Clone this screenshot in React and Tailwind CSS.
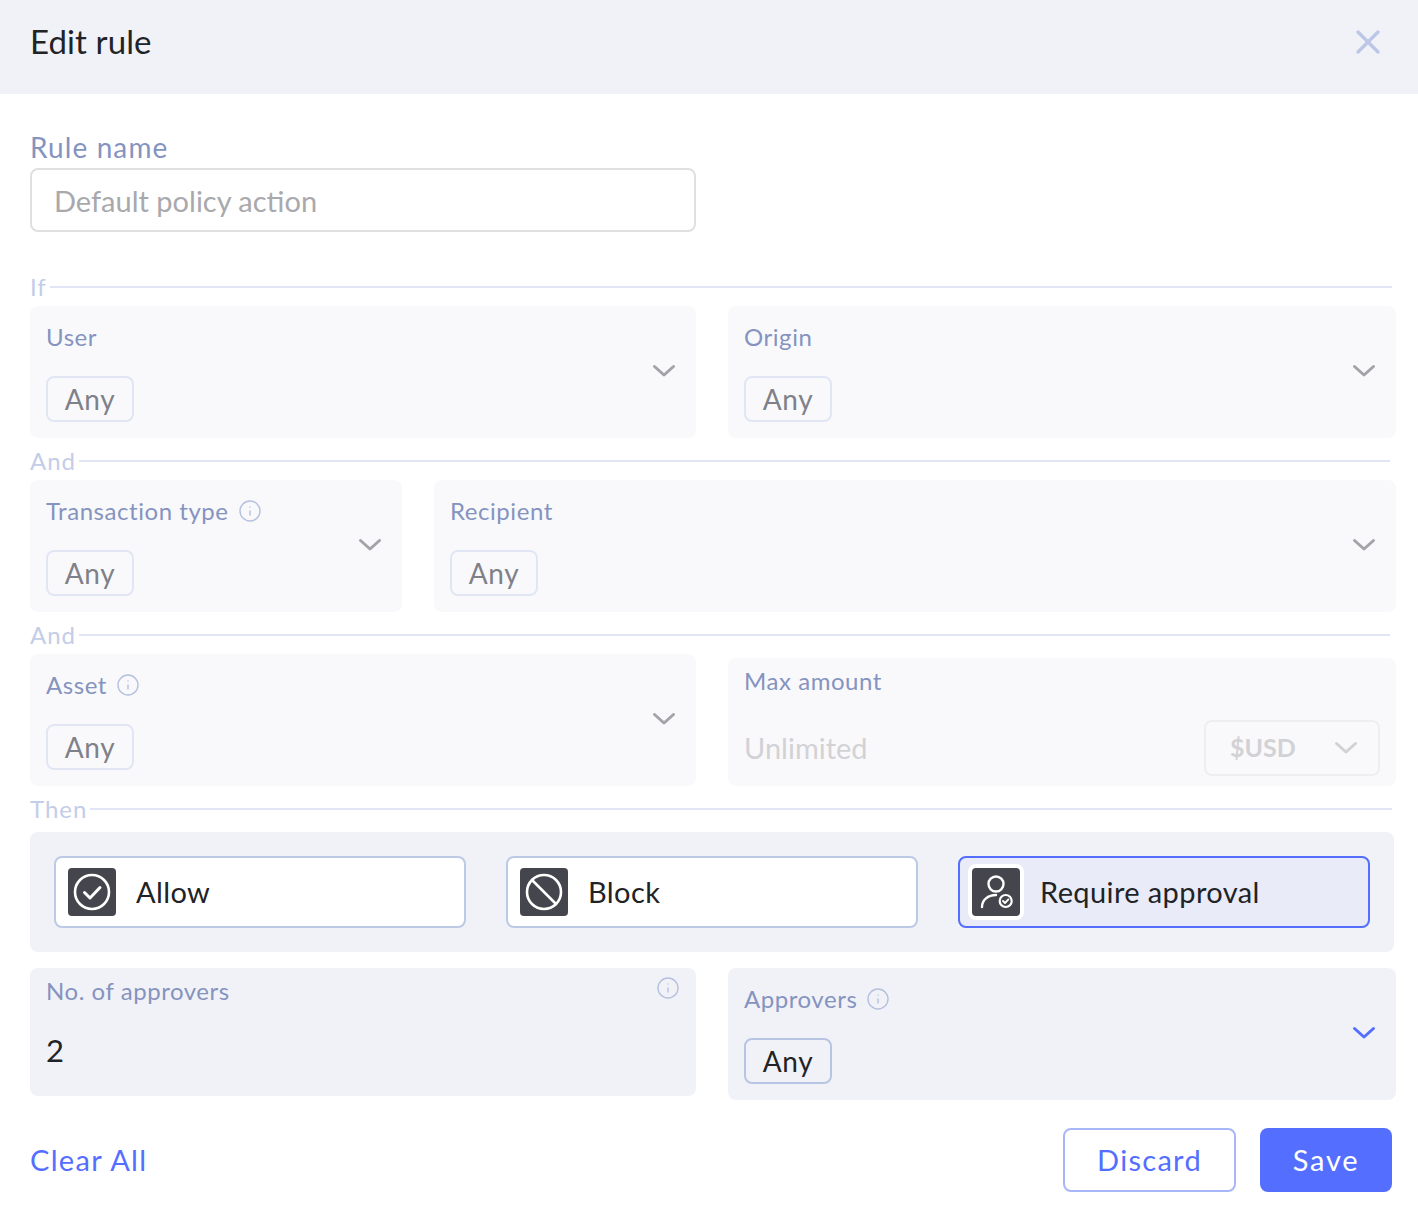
import { X, Info } from "lucide-react";

const labelClass = "text-[24px] leading-[30px] tracking-[0.55px] text-[#8593bf]";

function Chevron({ className = "text-[#a3a3a8]" }) {
  return (
    <svg className={className} width="24" height="14" viewBox="0 0 24 14" fill="none" stroke="currentColor" strokeWidth="3" strokeLinecap="round" strokeLinejoin="round">
      <path d="M2.5 2.5L12 11l9.5-8.5" />
    </svg>
  );
}

function InfoIcon() {
  return <Info className="text-[#b4c0de] ml-[9px]" size={24} strokeWidth={1.4} />;
}

function AnyTag({ active }) {
  return (
    <div
      className={`w-[88px] h-[46px] flex items-center justify-center rounded-lg border-2 text-[28px] tracking-[0.6px] ${
        active
          ? "border-[#b7c5e2] text-[#222326]"
          : "border-[#e1e6f5] text-[#808088]"
      }`}
    >
      Any
    </div>
  );
}

function Divider({ label, lineClass = "mr-[26px]" }) {
  return (
    <div className="flex items-center h-[38px]">
      <span className="text-[24px] leading-none tracking-[1px] text-[#c3cde8]">{label}</span>
      <div className={`flex-1 h-[2px] bg-[#e1e6f7] ml-[3px] ${lineClass}`} />
    </div>
  );
}

function SelectField({ label, info, className = "", active }) {
  return (
    <div className={`relative rounded-lg px-4 pt-[16px] ${active ? "bg-[#f1f2f7]" : "bg-[#f9f9fc]"} ${className}`}>
      <div className={`flex items-center ${labelClass}`}>
        {label}
        {info && <InfoIcon />}
      </div>
      <div className="mt-[24px]">
        <AnyTag active={active} />
      </div>
      <div className="absolute right-[20px] top-[58px]">
        <Chevron className={active ? "text-[#546fff]" : "text-[#a3a3a8]"} />
      </div>
    </div>
  );
}

function ActionOption({ label, selected, children }) {
  return (
    <div
      className={`flex-1 h-[72px] rounded-lg border-2 flex items-center pl-[8px] ${
        selected ? "border-[#546fff] bg-[#e9ebf8]" : "border-[#bccae6] bg-white"
      }`}
    >
      <div className="w-[56px] h-[56px] rounded-lg bg-white flex items-center justify-center">
        <div className="w-[48px] h-[48px] rounded bg-[#45464d] flex items-center justify-center">
          {children}
        </div>
      </div>
      <span className="ml-[16px] text-[29px] tracking-[0.4px] text-[#222326]">{label}</span>
    </div>
  );
}

export default function App() {
  return (
    <div className="w-[1418px] h-[1214px] bg-white font-['Lato','Noto_Sans',sans-serif]">
      <header className="h-[94px] bg-[#f1f2f7] flex items-center justify-between pl-[30px] pr-[30px] pb-[10px]">
        <h1 className="text-[33px] tracking-[0.1px] text-[#222326]">Edit rule</h1>
        <X className="text-[#bcc7e6]" size={40} strokeWidth={2} />
      </header>

      <div className="pl-[30px]">
        <div className="pt-[35px] text-[28px] leading-[36px] tracking-[1.1px] text-[#8593bf]">Rule name</div>
        <div className="mt-[3px] w-[666px] h-[64px] rounded-lg border-2 border-[#e0e0e2] flex items-center pl-[22px] pt-[2px] text-[29px] text-[#a9a9ad]">
          Default policy action
        </div>

        <div className="mt-[36px]">
          <Divider label="If" />
        </div>
        <div className="flex gap-[32px] mr-[22px]">
          <SelectField label="User" className="w-[666px] h-[132px]" />
          <SelectField label="Origin" className="flex-1 h-[132px]" />
        </div>

        <div className="mt-[4px]">
          <Divider label="And" lineClass="mr-[28px]" />
        </div>
        <div className="flex gap-[32px] mr-[22px]">
          <SelectField label="Transaction type" info className="w-[372px] h-[132px]" />
          <SelectField label="Recipient" className="flex-1 h-[132px]" />
        </div>

        <div className="mt-[4px]">
          <Divider label="And" lineClass="mr-[28px]" />
        </div>
        <div className="flex gap-[32px] mr-[22px]">
          <SelectField label="Asset" info className="w-[666px] h-[132px]" />
          <div className="flex-1 h-[128px] mt-[4px] rounded-lg bg-[#f9f9fc] px-4 pt-[8px]">
            <div className={labelClass}>Max amount</div>
            <div className="mt-[24px] flex items-center justify-between">
              <span className="text-[29px] text-[#d2d2d5]">Unlimited</span>
              <div className="w-[176px] h-[56px] rounded-lg border-2 border-[#eeeef1] flex items-center justify-between pl-[24px] pr-[20px]">
                <span className="text-[25px] font-bold text-[#d2d2d5]">$USD</span>
                <Chevron className="text-[#d2d2d5]" />
              </div>
            </div>
          </div>
        </div>

        <div className="mt-[4px] mb-[4px]">
          <Divider label="Then" />
        </div>
        <div className="mr-[24px] h-[120px] rounded-lg bg-[#f1f2f7] flex items-center gap-[40px] px-[24px]">
          <ActionOption label="Allow">
            <svg width="40" height="40" viewBox="0 0 40 40" fill="none" stroke="white" strokeLinecap="round" strokeLinejoin="round">
              <circle cx="20" cy="20" r="17" strokeWidth="2.6" />
              <path d="M12.5 20.5l5.5 5.5 10-10.5" strokeWidth="3" />
            </svg>
          </ActionOption>
          <ActionOption label="Block">
            <svg width="40" height="40" viewBox="0 0 40 40" fill="none" stroke="white" strokeLinecap="round">
              <circle cx="20" cy="20" r="17" strokeWidth="2.6" />
              <path d="M8 8l24 24" strokeWidth="2.6" />
            </svg>
          </ActionOption>
          <ActionOption label="Require approval" selected>
            <svg width="40" height="40" viewBox="0 0 40 40" fill="none" stroke="white" strokeLinecap="round" strokeLinejoin="round">
              <circle cx="20" cy="12" r="7.5" strokeWidth="2.4" />
              <path d="M6 35c0-7 6-12 14-12" strokeWidth="2.4" />
              <circle cx="29.7" cy="29" r="6" strokeWidth="2.2" />
              <path d="M27 29l2 2 3.4-3.6" strokeWidth="1.9" />
            </svg>
          </ActionOption>
        </div>

        <div className="mt-[16px] flex gap-[32px] mr-[22px] items-start">
          <div className="relative w-[666px] h-[128px] rounded-lg bg-[#f1f2f7] px-4 pt-[8px]">
            <div className={labelClass}>No. of approvers</div>
            <div className="mt-[24px] text-[31px] leading-[40px] text-[#222326]">2</div>
            <div className="absolute top-[8px] right-[16px]">
              <Info className="text-[#b4c0de]" size={24} strokeWidth={1.4} />
            </div>
          </div>
          <SelectField label="Approvers" info active className="flex-1 h-[132px]" />
        </div>

        <div className="mt-[28px] flex items-center justify-between mr-[26px]">
          <span className="text-[29px] tracking-[1.3px] text-[#546fff]">Clear All</span>
          <div className="flex gap-[24px]">
            <div className="w-[173px] h-[64px] rounded-lg border-2 border-[#a8b7f8] flex items-center justify-center text-[29px] tracking-[1.3px] text-[#546fff]">
              Discard
            </div>
            <div className="w-[132px] h-[64px] rounded-lg bg-[#546fff] flex items-center justify-center text-[29px] tracking-[1.8px] text-white">
              Save
            </div>
          </div>
        </div>
      </div>
    </div>
  );
}
